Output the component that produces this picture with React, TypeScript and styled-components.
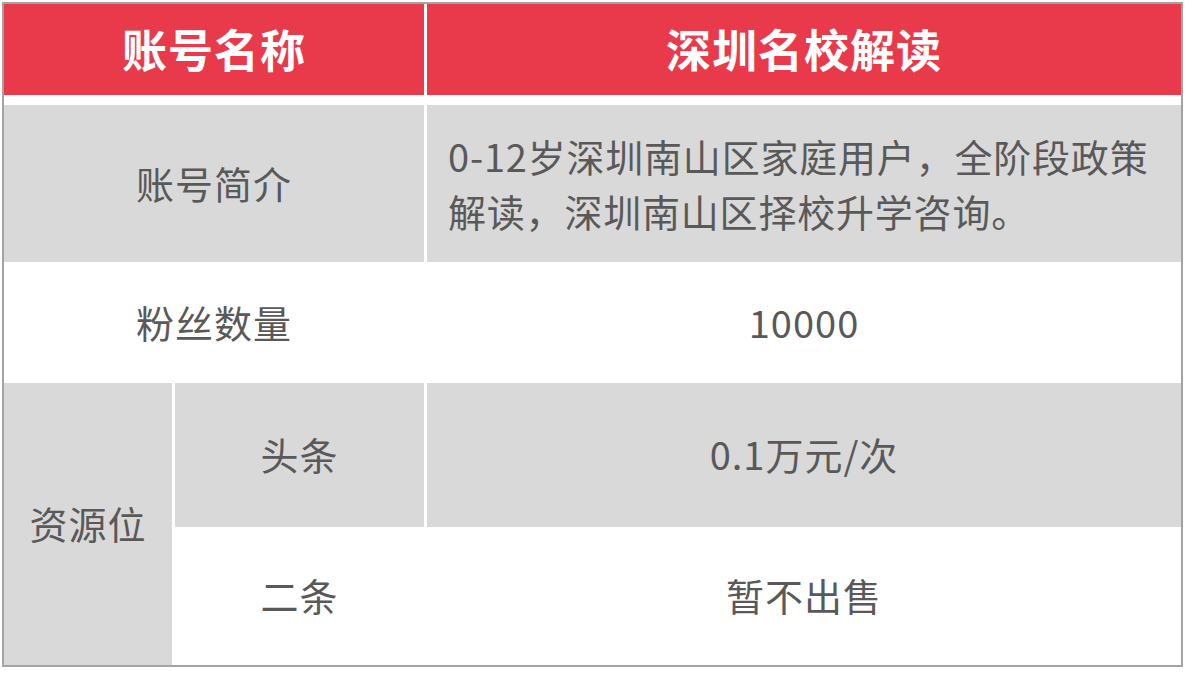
import React from 'react';
import styled, { createGlobalStyle } from 'styled-components';

const GlobalStyle = createGlobalStyle`
  html, body {
    margin: 0;
    padding: 0;
    background: #ffffff;
  }
  body {
    font-family: "Noto Sans CJK SC", "Noto Sans", sans-serif;
  }
`;

const Page = styled.div`
  padding: 2px 0 0 2px;
`;

const Table = styled.div`
  width: 1177px;
  border: 2px solid #a3a3a3;
  background: #ffffff;
  display: grid;
  grid-template-columns: 168px 249px 754px;
  grid-template-rows: 101px 157px 121px 144px 138px;
  column-gap: 3px;
  color: #595959;
  font-size: 38px;
  letter-spacing: 1px;
`;

const HeadCell = styled.div<{ $span?: number }>`
  grid-column: span ${(p) => p.$span ?? 1};
  height: 91px;
  margin-bottom: 10px;
  background: #e83a4a;
  color: #ffffff;
  font-weight: 700;
  font-size: 45px;
  display: flex;
  align-items: center;
  justify-content: center;
  letter-spacing: 1px;
  padding-bottom: 2px;
  box-sizing: border-box;
`;

const Cell = styled.div<{ $shade?: boolean; $span?: number; $rows?: number; $left?: boolean }>`
  grid-column: span ${(p) => p.$span ?? 1};
  grid-row: span ${(p) => p.$rows ?? 1};
  background: ${(p) => (p.$shade ? '#d9d9d9' : '#ffffff')};
  display: flex;
  align-items: center;
  justify-content: ${(p) => (p.$left ? 'flex-start' : 'center')};
  padding: ${(p) => (p.$left ? '0 10px 0 21px' : '0 0 3px')};
`;

const Desc = styled.div`
  display: flex;
  flex-direction: column;
  letter-spacing: 0.8px;
  padding-bottom: 2px;
`;

const DescLine = styled.span`
  display: block;
  line-height: 55px;
  white-space: nowrap;
`;

export default function App() {
  return (
    <>
      <GlobalStyle />
      <Page>
        <Table>
          <HeadCell $span={2}>账号名称</HeadCell>
          <HeadCell>深圳名校解读</HeadCell>

          <Cell $shade $span={2}>账号简介</Cell>
          <Cell $shade $left>
            <Desc>
              <DescLine>0-12岁深圳南山区家庭用户，全阶段政策</DescLine>
              <DescLine>解读，深圳南山区择校升学咨询。</DescLine>
            </Desc>
          </Cell>

          <Cell $span={2}>粉丝数量</Cell>
          <Cell>10000</Cell>

          <Cell $shade $rows={2}>资源位</Cell>
          <Cell $shade>头条</Cell>
          <Cell $shade>0.1万元/次</Cell>

          <Cell>二条</Cell>
          <Cell>暂不出售</Cell>
        </Table>
      </Page>
    </>
  );
}
